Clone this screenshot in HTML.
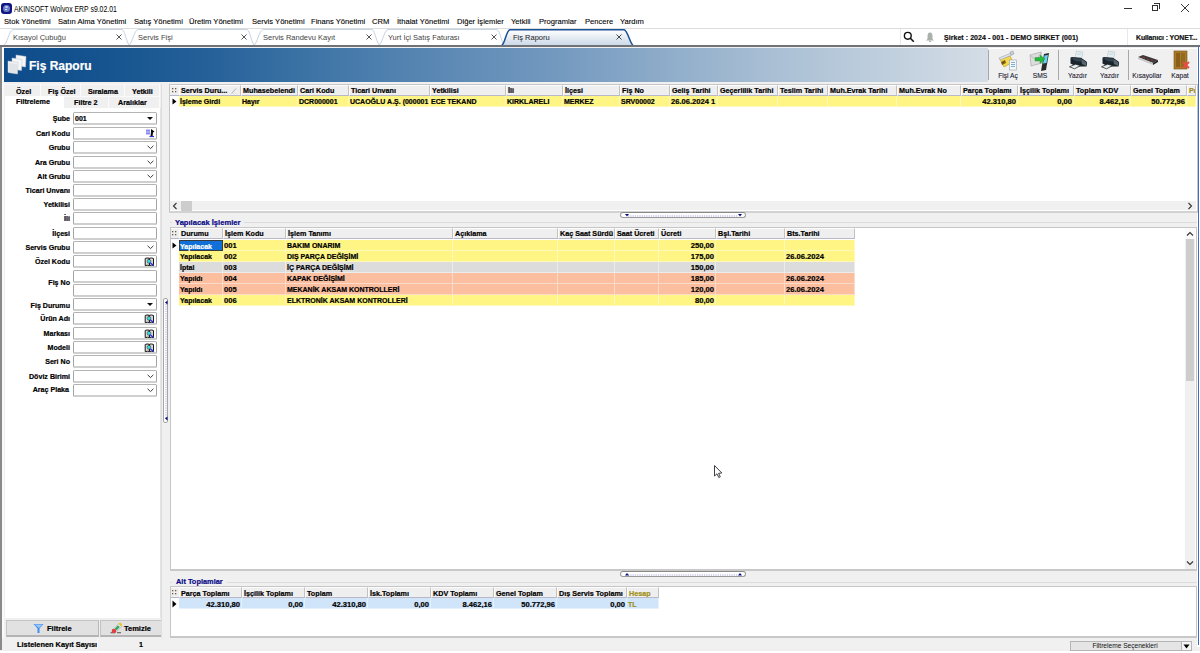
<!DOCTYPE html><html><head><meta charset="utf-8"><style>
*{margin:0;padding:0;box-sizing:border-box}
html,body{width:1200px;height:653px;overflow:hidden;background:#f0f0f0;font-family:"Liberation Sans",sans-serif;position:relative}
div{position:absolute}
.t{white-space:nowrap;line-height:10px;font-size:7.5px;color:#000}
.t[style*="bold"]{-webkit-text-stroke-width:0.2px}
.lbl{-webkit-text-stroke-width:0.2px}
.b{font-weight:bold}
.menu{font-size:7.6px;line-height:10px}
.hd{background:linear-gradient(#f7f7f7,#e6e6e6);border-right:1px solid #c8c8c8;border-bottom:1px solid #c8c8c8;font-weight:bold;font-size:7.5px;letter-spacing:-0.25px;line-height:10px;padding-left:2px;white-space:nowrap;overflow:hidden}
.cell{font-weight:bold;font-size:7.5px;letter-spacing:-0.25px;line-height:10px;padding-left:2px;white-space:nowrap;overflow:hidden;border-right:1px solid rgba(255,255,255,0.55);border-bottom:1px solid rgba(255,255,255,0.55)}
.r{text-align:right;padding-right:2px;padding-left:0}
.fld{background:#fff;border:1px solid #a0a0a0;border-bottom-color:#bcbcbc}
.lbl{font-weight:bold;font-size:7.2px;line-height:10px;text-align:right;white-space:nowrap}
</style></head><body>
<div style="left:0px;top:0px;width:1200px;height:28px;background:#fff"></div>
<div style="left:1px;top:3px;width:10.5px;height:10.5px;background:#0e1684;border-radius:3px"></div>
<div style="left:2.8px;top:4.8px;width:7px;height:7px;background:#7f8fd0;border-radius:50%;opacity:0.85"></div>
<div style="left:4.5px;top:6px;width:3px;height:2px;background:#c8d0f0;border-radius:50%"></div>
<div style="left:5px;top:8.5px;width:2px;height:1.5px;background:#e8ecff;border-radius:50%"></div>
<div class="t" style="left:14px;top:4px;font-size:8.2px;line-height:11px;transform:scaleX(0.84);transform-origin:0 0;color:#000">AKINSOFT Wolvox ERP s9.02.01</div>
<div style="left:1124px;top:8px;width:8px;height:1px;background:#333"></div>
<div style="left:1152px;top:5px;width:6px;height:6px;border:1px solid #333"></div>
<div style="left:1154px;top:3px;width:6px;height:6px;border-top:1px solid #333;border-right:1px solid #333"></div>
<svg style="position:absolute;left:1180px;top:3px" width="10" height="10"><path d="M1 1L9 9M9 1L1 9" stroke="#333" stroke-width="1"/></svg>
<div class="t" style="left:4px;top:17px;font-size:7.6px;color:#000;-webkit-text-stroke-width:0.1px">Stok Yönetimi</div>
<div class="t" style="left:58px;top:17px;font-size:7.6px;color:#000;-webkit-text-stroke-width:0.1px">Satın Alma Yönetimi</div>
<div class="t" style="left:134px;top:17px;font-size:7.6px;color:#000;-webkit-text-stroke-width:0.1px">Satış Yönetimi</div>
<div class="t" style="left:189px;top:17px;font-size:7.6px;color:#000;-webkit-text-stroke-width:0.1px">Üretim Yönetimi</div>
<div class="t" style="left:252px;top:17px;font-size:7.6px;color:#000;-webkit-text-stroke-width:0.1px">Servis Yönetimi</div>
<div class="t" style="left:311px;top:17px;font-size:7.6px;color:#000;-webkit-text-stroke-width:0.1px">Finans Yönetimi</div>
<div class="t" style="left:372px;top:17px;font-size:7.6px;color:#000;-webkit-text-stroke-width:0.1px">CRM</div>
<div class="t" style="left:397px;top:17px;font-size:7.6px;color:#000;-webkit-text-stroke-width:0.1px">İthalat Yönetimi</div>
<div class="t" style="left:457px;top:17px;font-size:7.6px;color:#000;-webkit-text-stroke-width:0.1px">Diğer İşlemler</div>
<div class="t" style="left:511px;top:17px;font-size:7.6px;color:#000;-webkit-text-stroke-width:0.1px">Yetkili</div>
<div class="t" style="left:539px;top:17px;font-size:7.6px;color:#000;-webkit-text-stroke-width:0.1px">Programlar</div>
<div class="t" style="left:585px;top:17px;font-size:7.6px;color:#000;-webkit-text-stroke-width:0.1px">Pencere</div>
<div class="t" style="left:620px;top:17px;font-size:7.6px;color:#000;-webkit-text-stroke-width:0.1px">Yardım</div>
<div style="left:0px;top:28px;width:1200px;height:1px;background:#dcdcdc"></div>
<div style="left:0px;top:29px;width:1200px;height:17px;background:#fff"></div>
<svg style="position:absolute;left:0;top:29px" width="1200" height="17"><path d="M3 16.5 C7 16.5 9 1 13 0.5 L122 0.5 C125 1 127 16.5 130 16.5" fill="#fff" stroke="#c5d3e2" stroke-width="1"/><path d="M128 16.5 C132 16.5 134 1 138 0.5 L247 0.5 C250 1 252 16.5 255 16.5" fill="#fff" stroke="#c5d3e2" stroke-width="1"/><path d="M253 16.5 C257 16.5 259 1 263 0.5 L372 0.5 C375 1 377 16.5 380 16.5" fill="#fff" stroke="#c5d3e2" stroke-width="1"/><path d="M378 16.5 C382 16.5 384 1 388 0.5 L497 0.5 C500 1 502 16.5 505 16.5" fill="#fff" stroke="#c5d3e2" stroke-width="1"/><defs><linearGradient id="ag" x1="0" y1="0" x2="0" y2="1"><stop offset="0" stop-color="#ffffff"/><stop offset="1" stop-color="#c9d7e6"/></linearGradient></defs><path d="M501 17 C505 16.5 506 1 510 0.7 L624 0.7 C628 1 630 16.5 634 17" fill="url(#ag)" stroke="#1a5096" stroke-width="1.5"/></svg>
<div class="t" style="left:13px;top:33px;font-size:7.5px;color:#444">Kısayol Çubuğu</div>
<svg style="position:absolute;left:116px;top:34px" width="6" height="6"><path d="M0.5 0.5L5.5 5.5M5.5 0.5L0.5 5.5" stroke="#444" stroke-width="0.9"/></svg>
<div class="t" style="left:138px;top:33px;font-size:7.5px;color:#444">Servis Fişi</div>
<svg style="position:absolute;left:241px;top:34px" width="6" height="6"><path d="M0.5 0.5L5.5 5.5M5.5 0.5L0.5 5.5" stroke="#444" stroke-width="0.9"/></svg>
<div class="t" style="left:263px;top:33px;font-size:7.5px;color:#444">Servis Randevu Kayıt</div>
<svg style="position:absolute;left:366px;top:34px" width="6" height="6"><path d="M0.5 0.5L5.5 5.5M5.5 0.5L0.5 5.5" stroke="#444" stroke-width="0.9"/></svg>
<div class="t" style="left:388px;top:33px;font-size:7.5px;color:#444">Yurt İçi Satış Faturası</div>
<svg style="position:absolute;left:491px;top:34px" width="6" height="6"><path d="M0.5 0.5L5.5 5.5M5.5 0.5L0.5 5.5" stroke="#444" stroke-width="0.9"/></svg>
<div class="t" style="left:513px;top:33px;font-size:7.5px;color:#222">Fiş Raporu</div>
<svg style="position:absolute;left:616px;top:34px" width="6" height="6"><path d="M0.5 0.5L5.5 5.5M5.5 0.5L0.5 5.5" stroke="#333" stroke-width="0.9"/></svg>
<div style="left:900px;top:29px;width:1px;height:17px;background:#e8e8e8"></div>
<div style="left:1127px;top:29px;width:1px;height:17px;background:#e8e8e8"></div>
<svg style="position:absolute;left:903px;top:31px" width="12" height="12"><circle cx="4.8" cy="4.8" r="3.4" fill="none" stroke="#111" stroke-width="1.4"/><path d="M7.3 7.3L10.8 10.8" stroke="#111" stroke-width="1.6"/></svg>
<svg style="position:absolute;left:925px;top:31px" width="10" height="12"><path d="M5 1.5C3 1.5 2.5 3.5 2.5 5.5L2.5 8L1 9.5L9 9.5L7.5 8L7.5 5.5C7.5 3.5 7 1.5 5 1.5Z" fill="#a9b1ab"/><rect x="4" y="9.8" width="2" height="1.2" fill="#a9b1ab"/></svg>
<div class="t" style="left:944px;top:33px;font-size:7px;font-weight:bold;letter-spacing:0.05px;color:#111">Şirket : 2024 - 001 - DEMO SIRKET (001)</div>
<div class="t" style="left:1136px;top:33px;font-size:6.9px;font-weight:bold;letter-spacing:-0.1px;color:#111">Kullanıcı : YONET...</div>
<div style="left:0px;top:45px;width:1200px;height:2px;background:#6f7378"></div>
<div style="left:0px;top:47px;width:2px;height:603px;background:#8a8a8a"></div>
<div style="left:2px;top:47px;width:2px;height:603px;background:#fafafa"></div>
<div style="left:1197px;top:47px;width:3px;height:600px;background:#fff"></div>
<div style="left:1198px;top:47px;width:1px;height:598px;background:#3b6fc0"></div>
<div style="left:4px;top:48px;width:984px;height:34px;background:linear-gradient(90deg,#0e4b8b 0%,#15548f 10%,#245f98 20%,#3a72a4 30%,#5282b0 40%,#7399bf 56%,#a9bfd4 78%,#d4dde6 100%)"></div>
<div class="t" style="left:29px;top:58px;font-size:12px;line-height:16px;font-weight:bold;color:#fff">Fiş Raporu</div>
<svg style="position:absolute;left:6px;top:54px" width="22" height="22">
<g fill="#f4f6f8" stroke="#c0c8d0" stroke-width="0.5">
<path d="M10 1L20 2.5L19.5 13L10 11.5Z"/>
<path d="M6 4L16 5.5L15.5 16.5L6 15Z"/>
<path d="M2 7L12 8.5L11.5 20L2 18.5Z"/>
</g>
<g stroke="#a8b0b8" stroke-width="0.5">
<path d="M4 9V18M6 9.3V18.5M8 9.6V19M10 9.9V19.3"/>
</g></svg>
<div style="left:988px;top:48px;width:209px;height:34px;background:#f0f0f0;border-top:1px solid #fff"></div>
<div style="left:988px;top:50px;width:1px;height:30px;background:#a8a8a8"></div>
<div style="left:1058px;top:50px;width:1px;height:30px;background:#a8a8a8"></div>
<div style="left:1128px;top:50px;width:1px;height:30px;background:#a8a8a8"></div>
<div class="t" style="left:978px;top:71px;width:60px;text-align:center;font-size:6.7px;line-height:9px;color:#1a1a30;-webkit-text-stroke-width:0.1px">Fişi Aç</div>
<div class="t" style="left:1010px;top:71px;width:60px;text-align:center;font-size:6.7px;line-height:9px;color:#1a1a30;-webkit-text-stroke-width:0.1px">SMS</div>
<div class="t" style="left:1047.5px;top:71px;width:60px;text-align:center;font-size:6.7px;line-height:9px;color:#1a1a30;-webkit-text-stroke-width:0.1px">Yazdır</div>
<div class="t" style="left:1079.5px;top:71px;width:60px;text-align:center;font-size:6.7px;line-height:9px;color:#1a1a30;-webkit-text-stroke-width:0.1px">Yazdır</div>
<div class="t" style="left:1117px;top:71px;width:60px;text-align:center;font-size:6.7px;line-height:9px;color:#1a1a30;-webkit-text-stroke-width:0.1px">Kısayollar</div>
<div class="t" style="left:1150px;top:71px;width:60px;text-align:center;font-size:6.7px;line-height:9px;color:#1a1a30;-webkit-text-stroke-width:0.1px">Kapat</div>
<svg style="position:absolute;left:997px;top:50px" width="22" height="21">
<path d="M3 9L13 6L16 12L7 17Z" fill="#f2d84a" stroke="#b8961a" stroke-width="0.6"/>
<path d="M4 12L8 10L9 13L5 15Z" fill="#7a5a10"/>
<path d="M2 8L14 3L15 5L3 10Z" fill="#dfe4ea" stroke="#8a96a2" stroke-width="0.5"/>
<path d="M13 2L16 1L17 4L14 5Z" fill="#c8d0d8" stroke="#8a96a2" stroke-width="0.5"/>
<rect x="12.5" y="10" width="7" height="10" fill="#f4f6f8" stroke="#9aa4ae" stroke-width="0.6"/>
<path d="M14 12.5H18M14 14.5H18M14 16.5H18" stroke="#5aa0d0" stroke-width="0.8"/>
</svg>
<svg style="position:absolute;left:1029px;top:50px" width="22" height="21">
<path d="M1 5L12 2L13 13L2 16Z" fill="#dcdcdc" stroke="#a0a0a0" stroke-width="0.6"/>
<path d="M1.5 5.5L7 10L12.5 2.5" fill="none" stroke="#b0b0b0" stroke-width="0.6"/>
<path d="M15 4L20 3L17 20L12 21Z" fill="#2a2a2a"/>
<path d="M15.5 5.5L19 5L17.5 13L14 13.5Z" fill="#62d4f0"/>
<path d="M16 9L11 5L11 7.5L6 7.5L6 11L11 11L11 13.5Z" fill="#28b83c" stroke="#1a8a2a" stroke-width="0.4"/>
</svg>
<svg style="position:absolute;left:1068px;top:50px" width="21" height="20">
<path d="M8.5 1L15 2.2L13.5 8.5L7 8Z" fill="#e6f0f4" stroke="#a8b8c0" stroke-width="0.5"/>
<path d="M9.5 3H13.5M9.3 4.5H13.2" stroke="#b8c8d0" stroke-width="0.5"/>
<path d="M2.5 8.5Q2 7.2 4 7L13 7.8L18.5 11.5Q19.5 12.5 19 14L18.5 16.5L8 16.5L2.5 13.5Z" fill="#1a242c"/>
<path d="M3 8L13 8.6L17.5 11.8L8 11.2Z" fill="#34444e"/>
<path d="M13.5 9.5L18.5 12.5L18 16L14 14Z" fill="#56666e"/>
<path d="M1.5 16.8L7.5 14.2L12.5 15.6L6.5 18.8Z" fill="#e4ecf0" stroke="#1a1a1a" stroke-width="0.7"/>
</svg>
<svg style="position:absolute;left:1100px;top:50px" width="21" height="20">
<path d="M8.5 1L15 2.2L13.5 8.5L7 8Z" fill="#e6f0f4" stroke="#a8b8c0" stroke-width="0.5"/>
<path d="M9.5 3H13.5M9.3 4.5H13.2" stroke="#b8c8d0" stroke-width="0.5"/>
<path d="M2.5 8.5Q2 7.2 4 7L13 7.8L18.5 11.5Q19.5 12.5 19 14L18.5 16.5L8 16.5L2.5 13.5Z" fill="#1a242c"/>
<path d="M3 8L13 8.6L17.5 11.8L8 11.2Z" fill="#34444e"/>
<path d="M13.5 9.5L18.5 12.5L18 16L14 14Z" fill="#56666e"/>
<path d="M1.5 16.8L7.5 14.2L12.5 15.6L6.5 18.8Z" fill="#e4ecf0" stroke="#1a1a1a" stroke-width="0.7"/>
</svg>
<svg style="position:absolute;left:1137px;top:54px" width="22" height="13">
<path d="M1 3L6 1L21 6L16 9Z" fill="#3a3a3a"/>
<path d="M1 3L16 9L16 11L1 5Z" fill="#c8c8c8"/>
<path d="M16 9L21 6L21 8L16 11Z" fill="#222"/>
<path d="M5 3L8 4M10 5L12 6M14 6L16 7" stroke="#c03030" stroke-width="0.8"/>
</svg>
<svg style="position:absolute;left:1173px;top:50px" width="17" height="20">
<rect x="1" y="1" width="13" height="18" fill="#a87a28" stroke="#7a5418" stroke-width="0.6"/>
<rect x="3" y="3" width="4" height="14" fill="#8a6018"/>
<rect x="8" y="3" width="4" height="14" fill="#946a20"/>
<path d="M10 12L16 18M16 12L10 18" stroke="#f04848" stroke-width="1.8"/>
</svg>
<div style="left:4px;top:84px;width:157px;height:534px;background:#f0f0f0"></div>
<div style="left:5px;top:84px;width:36px;height:12px;background:#f0f0f0;border-right:1px solid #fbfbfb;border-top:1px solid #f7f7f7"></div>
<div class="t" style="left:16px;top:86px;font-size:7.2px;font-weight:bold;line-height:11px">Özel</div>
<div style="left:41px;top:84px;width:40px;height:12px;background:#f0f0f0;border-right:1px solid #fbfbfb;border-top:1px solid #f7f7f7"></div>
<div class="t" style="left:48px;top:86px;font-size:7.2px;font-weight:bold;line-height:11px">Fiş Özel</div>
<div style="left:81px;top:84px;width:44px;height:12px;background:#f0f0f0;border-right:1px solid #fbfbfb;border-top:1px solid #f7f7f7"></div>
<div class="t" style="left:88px;top:86px;font-size:7.2px;font-weight:bold;line-height:11px">Sıralama</div>
<div style="left:125px;top:84px;width:35px;height:12px;background:#f0f0f0;border-right:1px solid #fbfbfb;border-top:1px solid #f7f7f7"></div>
<div class="t" style="left:132px;top:86px;font-size:7.2px;font-weight:bold;line-height:11px">Yetkili</div>
<div style="left:5px;top:96px;width:59px;height:12px;background:#fff"></div>
<div class="t" style="left:16px;top:96px;font-size:7.2px;font-weight:bold;line-height:11px">Filtreleme</div>
<div style="left:64px;top:96px;width:45px;height:12px;background:#f0f0f0;border-right:1px solid #fbfbfb;border-top:1px solid #fafafa"></div>
<div class="t" style="left:74px;top:97px;font-size:7.2px;font-weight:bold;line-height:11px">Filtre 2</div>
<div style="left:109px;top:96px;width:51px;height:12px;background:#f0f0f0;border-right:1px solid #fbfbfb;border-top:1px solid #fafafa"></div>
<div class="t" style="left:118px;top:97px;font-size:7.2px;font-weight:bold;line-height:11px">Aralıklar</div>
<div style="left:5px;top:108px;width:156px;height:510px;background:#fff;border-right:1px solid #e4e4e4"></div>
<div style="left:73px;top:112.0px;width:84px;height:13px;background:#fff;border:1px solid #a4a4a4;border-top-color:#b4b4b4;border-bottom:2px solid #cfcfcf;border-radius:1.5px"></div>
<div class="lbl" style="left:0px;top:114px;width:70px;font-size:7.1px;line-height:11px">Şube</div>
<svg style="position:absolute;left:147px;top:117.0px" width="6" height="4"><path d="M0 0L6 0L3 3Z" fill="#111"/></svg>
<div style="left:73px;top:126.5px;width:84px;height:13px;background:#fff;border:1px solid #a4a4a4;border-top-color:#b4b4b4;border-bottom:2px solid #cfcfcf;border-radius:1.5px"></div>
<div class="lbl" style="left:0px;top:129px;width:70px;font-size:7.1px;line-height:11px">Cari Kodu</div>
<svg style="position:absolute;left:145px;top:128.0px" width="11" height="10"><path d="M1 2.2H5M1 4H5M1 5.8H5" stroke="#5050f0" stroke-width="1"/><path d="M6 1L9.5 3.5L8 4.5L7.5 8.5L5.5 8.5L6 4Z" fill="#0a0a0a"/><path d="M4.5 8.5H9" stroke="#2a30d0" stroke-width="1.2"/></svg>
<div style="left:73px;top:141.0px;width:84px;height:13px;background:#fff;border:1px solid #a4a4a4;border-top-color:#b4b4b4;border-bottom:2px solid #cfcfcf;border-radius:1.5px"></div>
<div class="lbl" style="left:0px;top:143px;width:70px;font-size:7.1px;line-height:11px">Grubu</div>
<svg style="position:absolute;left:147px;top:145.0px" width="7" height="5"><path d="M0.6 0.8L3.5 3.6L6.4 0.8" fill="none" stroke="#3a3a3a" stroke-width="1"/></svg>
<div style="left:73px;top:155.5px;width:84px;height:13px;background:#fff;border:1px solid #a4a4a4;border-top-color:#b4b4b4;border-bottom:2px solid #cfcfcf;border-radius:1.5px"></div>
<div class="lbl" style="left:0px;top:158px;width:70px;font-size:7.1px;line-height:11px">Ara Grubu</div>
<svg style="position:absolute;left:147px;top:159.5px" width="7" height="5"><path d="M0.6 0.8L3.5 3.6L6.4 0.8" fill="none" stroke="#3a3a3a" stroke-width="1"/></svg>
<div style="left:73px;top:169.5px;width:84px;height:13px;background:#fff;border:1px solid #a4a4a4;border-top-color:#b4b4b4;border-bottom:2px solid #cfcfcf;border-radius:1.5px"></div>
<div class="lbl" style="left:0px;top:172px;width:70px;font-size:7.1px;line-height:11px">Alt Grubu</div>
<svg style="position:absolute;left:147px;top:173.5px" width="7" height="5"><path d="M0.6 0.8L3.5 3.6L6.4 0.8" fill="none" stroke="#3a3a3a" stroke-width="1"/></svg>
<div style="left:73px;top:184.0px;width:84px;height:13px;background:#fff;border:1px solid #a4a4a4;border-top-color:#b4b4b4;border-bottom:2px solid #cfcfcf;border-radius:1.5px"></div>
<div class="lbl" style="left:0px;top:186px;width:70px;font-size:7.1px;line-height:11px">Ticari Unvanı</div>
<div style="left:73px;top:197.5px;width:84px;height:13px;background:#fff;border:1px solid #a4a4a4;border-top-color:#b4b4b4;border-bottom:2px solid #cfcfcf;border-radius:1.5px"></div>
<div class="lbl" style="left:0px;top:200px;width:70px;font-size:7.1px;line-height:11px">Yetkilisi</div>
<div style="left:73px;top:212.0px;width:84px;height:13px;background:#fff;border:1px solid #a4a4a4;border-top-color:#b4b4b4;border-bottom:2px solid #cfcfcf;border-radius:1.5px"></div>
<div class="lbl" style="left:0px;top:214px;width:70px;font-size:7.1px;line-height:11px">İli</div>
<div style="left:73px;top:226.5px;width:84px;height:13px;background:#fff;border:1px solid #a4a4a4;border-top-color:#b4b4b4;border-bottom:2px solid #cfcfcf;border-radius:1.5px"></div>
<div class="lbl" style="left:0px;top:229px;width:70px;font-size:7.1px;line-height:11px">İlçesi</div>
<div style="left:73px;top:240.5px;width:84px;height:13px;background:#fff;border:1px solid #a4a4a4;border-top-color:#b4b4b4;border-bottom:2px solid #cfcfcf;border-radius:1.5px"></div>
<div class="lbl" style="left:0px;top:243px;width:70px;font-size:7.1px;line-height:11px">Servis Grubu</div>
<svg style="position:absolute;left:147px;top:244.5px" width="7" height="5"><path d="M0.6 0.8L3.5 3.6L6.4 0.8" fill="none" stroke="#3a3a3a" stroke-width="1"/></svg>
<div style="left:73px;top:255.0px;width:84px;height:13px;background:#fff;border:1px solid #a4a4a4;border-top-color:#b4b4b4;border-bottom:2px solid #cfcfcf;border-radius:1.5px"></div>
<div class="lbl" style="left:0px;top:257px;width:70px;font-size:7.1px;line-height:11px">Özel Kodu</div>
<svg style="position:absolute;left:144px;top:257.0px" width="11" height="10"><path d="M1.2 1.5Q3 0.6 5 1.2L5.5 8.5Q3.5 8 1.2 8.6Z" fill="#d8d8d8" stroke="#1a1a1a" stroke-width="1"/><path d="M5.5 1.2Q7.5 0.6 9.5 1.5L9.5 8.6Q7.5 8 5.5 8.5Z" fill="#d8d8d8" stroke="#1a1a1a" stroke-width="1"/><circle cx="5" cy="4.3" r="1.9" fill="#30e0e0" stroke="#402020" stroke-width="0.5"/><path d="M6.3 5.8L9.5 8.6" stroke="#3030e0" stroke-width="1.3"/></svg>
<div style="left:73px;top:269.5px;width:84px;height:13px;background:#fff;border:1px solid #a4a4a4;border-top-color:#b4b4b4;border-bottom:2px solid #cfcfcf;border-radius:1.5px"></div>
<div style="left:73px;top:284.0px;width:84px;height:13px;background:#fff;border:1px solid #a4a4a4;border-top-color:#b4b4b4;border-bottom:2px solid #cfcfcf;border-radius:1.5px"></div>
<div style="left:73px;top:298.0px;width:84px;height:13px;background:#fff;border:1px solid #a4a4a4;border-top-color:#b4b4b4;border-bottom:2px solid #cfcfcf;border-radius:1.5px"></div>
<div class="lbl" style="left:0px;top:301px;width:70px;font-size:7.1px;line-height:11px">Fiş Durumu</div>
<svg style="position:absolute;left:147px;top:303.0px" width="6" height="4"><path d="M0 0L6 0L3 3Z" fill="#111"/></svg>
<div style="left:73px;top:312.0px;width:84px;height:13px;background:#fff;border:1px solid #a4a4a4;border-top-color:#b4b4b4;border-bottom:2px solid #cfcfcf;border-radius:1.5px"></div>
<div class="lbl" style="left:0px;top:314px;width:70px;font-size:7.1px;line-height:11px">Ürün Adı</div>
<svg style="position:absolute;left:144px;top:314.0px" width="11" height="10"><path d="M1.2 1.5Q3 0.6 5 1.2L5.5 8.5Q3.5 8 1.2 8.6Z" fill="#d8d8d8" stroke="#1a1a1a" stroke-width="1"/><path d="M5.5 1.2Q7.5 0.6 9.5 1.5L9.5 8.6Q7.5 8 5.5 8.5Z" fill="#d8d8d8" stroke="#1a1a1a" stroke-width="1"/><circle cx="5" cy="4.3" r="1.9" fill="#30e0e0" stroke="#402020" stroke-width="0.5"/><path d="M6.3 5.8L9.5 8.6" stroke="#3030e0" stroke-width="1.3"/></svg>
<div style="left:73px;top:326.5px;width:84px;height:13px;background:#fff;border:1px solid #a4a4a4;border-top-color:#b4b4b4;border-bottom:2px solid #cfcfcf;border-radius:1.5px"></div>
<div class="lbl" style="left:0px;top:329px;width:70px;font-size:7.1px;line-height:11px">Markası</div>
<svg style="position:absolute;left:144px;top:328.5px" width="11" height="10"><path d="M1.2 1.5Q3 0.6 5 1.2L5.5 8.5Q3.5 8 1.2 8.6Z" fill="#d8d8d8" stroke="#1a1a1a" stroke-width="1"/><path d="M5.5 1.2Q7.5 0.6 9.5 1.5L9.5 8.6Q7.5 8 5.5 8.5Z" fill="#d8d8d8" stroke="#1a1a1a" stroke-width="1"/><circle cx="5" cy="4.3" r="1.9" fill="#30e0e0" stroke="#402020" stroke-width="0.5"/><path d="M6.3 5.8L9.5 8.6" stroke="#3030e0" stroke-width="1.3"/></svg>
<div style="left:73px;top:340.5px;width:84px;height:13px;background:#fff;border:1px solid #a4a4a4;border-top-color:#b4b4b4;border-bottom:2px solid #cfcfcf;border-radius:1.5px"></div>
<div class="lbl" style="left:0px;top:343px;width:70px;font-size:7.1px;line-height:11px">Modeli</div>
<svg style="position:absolute;left:144px;top:342.5px" width="11" height="10"><path d="M1.2 1.5Q3 0.6 5 1.2L5.5 8.5Q3.5 8 1.2 8.6Z" fill="#d8d8d8" stroke="#1a1a1a" stroke-width="1"/><path d="M5.5 1.2Q7.5 0.6 9.5 1.5L9.5 8.6Q7.5 8 5.5 8.5Z" fill="#d8d8d8" stroke="#1a1a1a" stroke-width="1"/><circle cx="5" cy="4.3" r="1.9" fill="#30e0e0" stroke="#402020" stroke-width="0.5"/><path d="M6.3 5.8L9.5 8.6" stroke="#3030e0" stroke-width="1.3"/></svg>
<div style="left:73px;top:355.0px;width:84px;height:13px;background:#fff;border:1px solid #a4a4a4;border-top-color:#b4b4b4;border-bottom:2px solid #cfcfcf;border-radius:1.5px"></div>
<div class="lbl" style="left:0px;top:357px;width:70px;font-size:7.1px;line-height:11px">Seri No</div>
<div style="left:73px;top:369.5px;width:84px;height:13px;background:#fff;border:1px solid #a4a4a4;border-top-color:#b4b4b4;border-bottom:2px solid #cfcfcf;border-radius:1.5px"></div>
<div class="lbl" style="left:0px;top:372px;width:70px;font-size:7.1px;line-height:11px">Döviz Birimi</div>
<svg style="position:absolute;left:147px;top:373.5px" width="7" height="5"><path d="M0.6 0.8L3.5 3.6L6.4 0.8" fill="none" stroke="#3a3a3a" stroke-width="1"/></svg>
<div style="left:73px;top:383.5px;width:84px;height:13px;background:#fff;border:1px solid #a4a4a4;border-top-color:#b4b4b4;border-bottom:2px solid #cfcfcf;border-radius:1.5px"></div>
<div class="lbl" style="left:0px;top:385px;width:69px;font-size:7.1px;line-height:11px">Araç Plaka</div>
<svg style="position:absolute;left:147px;top:387.5px" width="7" height="5"><path d="M0.6 0.8L3.5 3.6L6.4 0.8" fill="none" stroke="#3a3a3a" stroke-width="1"/></svg>
<div class="lbl" style="left:0px;top:278px;width:70px;font-size:7.1px;line-height:11px">Fiş No</div>
<div class="t" style="left:75px;top:113px;font-size:7px;font-weight:bold;line-height:11px">001</div>
<div style="left:4px;top:618px;width:157px;height:20px;background:#f0f0f0"></div>
<div style="left:6px;top:620px;width:93px;height:17px;background:#e1e1e1;border:1px solid #c4c4c4;border-bottom:2px solid #b4b4b4;border-right-color:#b8b8b8"></div>
<div style="left:100px;top:620px;width:62px;height:17px;background:#e1e1e1;border:1px solid #c4c4c4;border-bottom:2px solid #b4b4b4;border-right-color:#b8b8b8"></div>
<svg style="position:absolute;left:33px;top:623px" width="11" height="11"><path d="M0.5 1L10.5 1L6.5 5.5L6.5 10L4.5 10L4.5 5.5Z" fill="#3d8ef0"/><path d="M1.5 1.5L9.5 1.5L6 5" fill="#9cc6f8"/></svg>
<div class="t" style="left:47px;top:623px;font-size:7.5px;font-weight:bold;line-height:11px">Filtrele</div>
<svg style="position:absolute;left:110px;top:622px" width="13" height="12"><path d="M0.5 10.8H4.5M7 10.8H11" stroke="#505050" stroke-width="1.1"/><path d="M2.5 8L8.5 1.8L11.5 4.6L5.5 10.8Z" fill="#eef2f2" stroke="#8a9a9a" stroke-width="0.5"/><path d="M4.8 6.6L8 3.3L9.8 5L6.6 8.4Z" fill="#2faa60"/><path d="M8.5 1.8L10.3 0.5L12 2.3L11.5 4.6Z" fill="#f2c418"/><circle cx="4" cy="9" r="2.3" fill="#e04040"/></svg>
<div class="t" style="left:124px;top:623px;font-size:7.5px;font-weight:bold;line-height:11px">Temizle</div>
<div style="left:0px;top:638px;width:1197px;height:13px;background:#f0f0f0"></div>
<div style="left:0px;top:651px;width:1200px;height:2px;background:#fff"></div>
<div style="left:0px;top:47px;width:2px;height:603px;background:#8a8a8a"></div>
<div style="left:2px;top:47px;width:2px;height:591px;background:#fafafa"></div>
<div class="t" style="left:17px;top:639px;font-size:7.4px;font-weight:bold;line-height:11px">Listelenen Kayıt Sayısı</div>
<div style="left:97px;top:638px;width:47px;height:13px;background:#f0f0f0;border-left:1px solid #f8f8f8"></div>
<div class="t" style="left:139px;top:639px;font-size:7.2px;font-weight:bold;line-height:11px">1</div>
<div style="left:1070px;top:641px;width:122px;height:10px;background:#e5e5e5;border:1px solid #b5b5b5"></div>
<div class="t" style="left:1070px;top:641px;width:110px;text-align:center;font-size:6.6px;line-height:10px;color:#111">Filtreleme Seçenekleri</div>
<div style="left:1181px;top:641px;width:11px;height:10px;background:#f4f4f4;border:1px solid #b5b5b5"></div>
<svg style="position:absolute;left:1183px;top:644px" width="7" height="5"><path d="M0.5 0.5L6.5 0.5L3.5 4.5Z" fill="#000"/></svg>
<div style="left:161px;top:84px;width:9px;height:554px;background:#f0f0f0;border-left:1px solid #dedede"></div>
<div style="left:163px;top:298px;width:5px;height:125px;background:#fff;border:1px solid #a6a6a6;border-radius:2px"></div>
<svg style="position:absolute;left:165px;top:304px" width="2" height="114"><path d="M1 0V114" stroke="#9c9cd4" stroke-width="0.9" stroke-dasharray="1.2 1.1"/></svg>
<svg style="position:absolute;left:164px;top:299px" width="4" height="124"><path d="M3.5 1.5L1 3.5L3.5 5.5Z" fill="#0a0a7a"/><path d="M3.5 117.5L1 119.5L3.5 121.5Z" fill="#0a0a7a"/></svg>
<div style="left:169px;top:84px;width:1029px;height:129px;background:#fff;border:1px solid #c6c6c6;border-bottom:2px solid #d2d2d2"></div>
<div style="left:170px;top:85px;width:9px;height:11px;background:#efefef;border-top:1px solid #fdfdfd;border-bottom:1px solid #b8b8c8"></div>
<svg style="position:absolute;left:172px;top:88px" width="6" height="6"><g fill="#6a5840"><rect x="0" y="0" width="1.3" height="1.3"/><rect x="3" y="0" width="1.3" height="1.3"/><rect x="0" y="3" width="1.3" height="1.3"/><rect x="3" y="3" width="1.3" height="1.3"/></g></svg>
<div style="left:179px;top:85px;width:62px;height:11px;background:#efefef;border-top:1px solid #fdfdfd;border-left:1px solid #fdfdfd;border-right:1px solid #c2c2c2;border-bottom:1px solid #b8b8c8;overflow:hidden"><div class="t" style="left:1px;top:0px;font-size:7.2px;font-weight:bold;line-height:9px;color:#000">Servis Duru...</div></div>
<div style="left:179px;top:96px;width:62px;height:11px;background:#fef584;border-right:1px solid rgba(255,255,255,0.45);border-bottom:1px solid rgba(255,255,255,0.45);overflow:hidden;"><div class="t" style="left:1px;top:1px;font-size:7px;font-weight:bold;line-height:10px;color:#000">İşleme Girdi</div></div>
<div style="left:241px;top:85px;width:57px;height:11px;background:#efefef;border-top:1px solid #fdfdfd;border-left:1px solid #fdfdfd;border-right:1px solid #c2c2c2;border-bottom:1px solid #b8b8c8;overflow:hidden"><div class="t" style="left:1px;top:0px;font-size:7.2px;font-weight:bold;line-height:9px;color:#000">Muhasebelendi</div></div>
<div style="left:241px;top:96px;width:57px;height:11px;background:#fef584;border-right:1px solid rgba(255,255,255,0.45);border-bottom:1px solid rgba(255,255,255,0.45);overflow:hidden;"><div class="t" style="left:1px;top:1px;font-size:7px;font-weight:bold;line-height:10px;color:#000">Hayır</div></div>
<div style="left:298px;top:85px;width:51px;height:11px;background:#efefef;border-top:1px solid #fdfdfd;border-left:1px solid #fdfdfd;border-right:1px solid #c2c2c2;border-bottom:1px solid #b8b8c8;overflow:hidden"><div class="t" style="left:1px;top:0px;font-size:7.2px;font-weight:bold;line-height:9px;color:#000">Cari Kodu</div></div>
<div style="left:298px;top:96px;width:51px;height:11px;background:#fef584;border-right:1px solid rgba(255,255,255,0.45);border-bottom:1px solid rgba(255,255,255,0.45);overflow:hidden;"><div class="t" style="left:1px;top:1px;font-size:7px;font-weight:bold;line-height:10px;color:#000">DCR000001</div></div>
<div style="left:349px;top:85px;width:81px;height:11px;background:#efefef;border-top:1px solid #fdfdfd;border-left:1px solid #fdfdfd;border-right:1px solid #c2c2c2;border-bottom:1px solid #b8b8c8;overflow:hidden"><div class="t" style="left:1px;top:0px;font-size:7.2px;font-weight:bold;line-height:9px;color:#000">Ticari Unvanı</div></div>
<div style="left:349px;top:96px;width:81px;height:11px;background:#fef584;border-right:1px solid rgba(255,255,255,0.45);border-bottom:1px solid rgba(255,255,255,0.45);overflow:hidden;"><div class="t" style="left:1px;top:1px;font-size:7px;font-weight:bold;line-height:10px;color:#000">UCAOĞLU A.Ş. (000001</div></div>
<div style="left:430px;top:85px;width:76px;height:11px;background:#efefef;border-top:1px solid #fdfdfd;border-left:1px solid #fdfdfd;border-right:1px solid #c2c2c2;border-bottom:1px solid #b8b8c8;overflow:hidden"><div class="t" style="left:1px;top:0px;font-size:7.2px;font-weight:bold;line-height:9px;color:#000">Yetkilisi</div></div>
<div style="left:430px;top:96px;width:76px;height:11px;background:#fef584;border-right:1px solid rgba(255,255,255,0.45);border-bottom:1px solid rgba(255,255,255,0.45);overflow:hidden;"><div class="t" style="left:1px;top:1px;font-size:7px;font-weight:bold;line-height:10px;color:#000">ECE TEKAND</div></div>
<div style="left:506px;top:85px;width:57px;height:11px;background:#efefef;border-top:1px solid #fdfdfd;border-left:1px solid #fdfdfd;border-right:1px solid #c2c2c2;border-bottom:1px solid #b8b8c8;overflow:hidden"><div class="t" style="left:1px;top:0px;font-size:7.2px;font-weight:bold;line-height:9px;color:#000">İli</div></div>
<div style="left:506px;top:96px;width:57px;height:11px;background:#fef584;border-right:1px solid rgba(255,255,255,0.45);border-bottom:1px solid rgba(255,255,255,0.45);overflow:hidden;"><div class="t" style="left:1px;top:1px;font-size:7px;font-weight:bold;line-height:10px;color:#000">KIRKLARELI</div></div>
<div style="left:563px;top:85px;width:57px;height:11px;background:#efefef;border-top:1px solid #fdfdfd;border-left:1px solid #fdfdfd;border-right:1px solid #c2c2c2;border-bottom:1px solid #b8b8c8;overflow:hidden"><div class="t" style="left:1px;top:0px;font-size:7.2px;font-weight:bold;line-height:9px;color:#000">İlçesi</div></div>
<div style="left:563px;top:96px;width:57px;height:11px;background:#fef584;border-right:1px solid rgba(255,255,255,0.45);border-bottom:1px solid rgba(255,255,255,0.45);overflow:hidden;"><div class="t" style="left:1px;top:1px;font-size:7px;font-weight:bold;line-height:10px;color:#000">MERKEZ</div></div>
<div style="left:620px;top:85px;width:50px;height:11px;background:#efefef;border-top:1px solid #fdfdfd;border-left:1px solid #fdfdfd;border-right:1px solid #c2c2c2;border-bottom:1px solid #b8b8c8;overflow:hidden"><div class="t" style="left:1px;top:0px;font-size:7.2px;font-weight:bold;line-height:9px;color:#000">Fiş No</div></div>
<div style="left:620px;top:96px;width:50px;height:11px;background:#fef584;border-right:1px solid rgba(255,255,255,0.45);border-bottom:1px solid rgba(255,255,255,0.45);overflow:hidden;"><div class="t" style="left:1px;top:1px;font-size:7px;font-weight:bold;line-height:10px;color:#000">SRV00002</div></div>
<div style="left:670px;top:85px;width:48px;height:11px;background:#efefef;border-top:1px solid #fdfdfd;border-left:1px solid #fdfdfd;border-right:1px solid #c2c2c2;border-bottom:1px solid #b8b8c8;overflow:hidden"><div class="t" style="left:1px;top:0px;font-size:7.2px;font-weight:bold;line-height:9px;color:#000">Geliş Tarihi</div></div>
<div style="left:670px;top:96px;width:48px;height:11px;background:#fef584;border-right:1px solid rgba(255,255,255,0.45);border-bottom:1px solid rgba(255,255,255,0.45);overflow:hidden;"><div class="t" style="left:1px;top:1px;font-size:7.6px;font-weight:bold;line-height:10px;color:#000">26.06.2024 1</div></div>
<div style="left:718px;top:85px;width:60px;height:11px;background:#efefef;border-top:1px solid #fdfdfd;border-left:1px solid #fdfdfd;border-right:1px solid #c2c2c2;border-bottom:1px solid #b8b8c8;overflow:hidden"><div class="t" style="left:1px;top:0px;font-size:7.2px;font-weight:bold;line-height:9px;color:#000">Geçerlilik Tarihi</div></div>
<div style="left:718px;top:96px;width:60px;height:11px;background:#fef584;border-right:1px solid rgba(255,255,255,0.45);border-bottom:1px solid rgba(255,255,255,0.45);overflow:hidden;"><div class="t" style="left:1px;top:1px;font-size:7px;font-weight:bold;line-height:10px;color:#000"></div></div>
<div style="left:778px;top:85px;width:50px;height:11px;background:#efefef;border-top:1px solid #fdfdfd;border-left:1px solid #fdfdfd;border-right:1px solid #c2c2c2;border-bottom:1px solid #b8b8c8;overflow:hidden"><div class="t" style="left:1px;top:0px;font-size:7.2px;font-weight:bold;line-height:9px;color:#000">Teslim Tarihi</div></div>
<div style="left:778px;top:96px;width:50px;height:11px;background:#fef584;border-right:1px solid rgba(255,255,255,0.45);border-bottom:1px solid rgba(255,255,255,0.45);overflow:hidden;"><div class="t" style="left:1px;top:1px;font-size:7px;font-weight:bold;line-height:10px;color:#000"></div></div>
<div style="left:828px;top:85px;width:69px;height:11px;background:#efefef;border-top:1px solid #fdfdfd;border-left:1px solid #fdfdfd;border-right:1px solid #c2c2c2;border-bottom:1px solid #b8b8c8;overflow:hidden"><div class="t" style="left:1px;top:0px;font-size:7.2px;font-weight:bold;line-height:9px;color:#000">Muh.Evrak Tarihi</div></div>
<div style="left:828px;top:96px;width:69px;height:11px;background:#fef584;border-right:1px solid rgba(255,255,255,0.45);border-bottom:1px solid rgba(255,255,255,0.45);overflow:hidden;"><div class="t" style="left:1px;top:1px;font-size:7px;font-weight:bold;line-height:10px;color:#000"></div></div>
<div style="left:897px;top:85px;width:64px;height:11px;background:#efefef;border-top:1px solid #fdfdfd;border-left:1px solid #fdfdfd;border-right:1px solid #c2c2c2;border-bottom:1px solid #b8b8c8;overflow:hidden"><div class="t" style="left:1px;top:0px;font-size:7.2px;font-weight:bold;line-height:9px;color:#000">Muh.Evrak No</div></div>
<div style="left:897px;top:96px;width:64px;height:11px;background:#fef584;border-right:1px solid rgba(255,255,255,0.45);border-bottom:1px solid rgba(255,255,255,0.45);overflow:hidden;"><div class="t" style="left:1px;top:1px;font-size:7px;font-weight:bold;line-height:10px;color:#000"></div></div>
<div style="left:961px;top:85px;width:57px;height:11px;background:#efefef;border-top:1px solid #fdfdfd;border-left:1px solid #fdfdfd;border-right:1px solid #c2c2c2;border-bottom:1px solid #b8b8c8;overflow:hidden"><div class="t" style="left:1px;top:0px;font-size:7.2px;font-weight:bold;line-height:9px;color:#000">Parça Toplamı</div></div>
<div style="left:961px;top:96px;width:57px;height:11px;background:#fef584;border-right:1px solid rgba(255,255,255,0.45);border-bottom:1px solid rgba(255,255,255,0.45);overflow:hidden;"><div class="t" style="right:1px;top:1px;font-size:7.6px;font-weight:bold;line-height:10px;color:#000">42.310,80</div></div>
<div style="left:1018px;top:85px;width:56px;height:11px;background:#efefef;border-top:1px solid #fdfdfd;border-left:1px solid #fdfdfd;border-right:1px solid #c2c2c2;border-bottom:1px solid #b8b8c8;overflow:hidden"><div class="t" style="left:1px;top:0px;font-size:7.2px;font-weight:bold;line-height:9px;color:#000">İşçilik Toplamı</div></div>
<div style="left:1018px;top:96px;width:56px;height:11px;background:#fef584;border-right:1px solid rgba(255,255,255,0.45);border-bottom:1px solid rgba(255,255,255,0.45);overflow:hidden;"><div class="t" style="right:1px;top:1px;font-size:7.6px;font-weight:bold;line-height:10px;color:#000">0,00</div></div>
<div style="left:1074px;top:85px;width:57px;height:11px;background:#efefef;border-top:1px solid #fdfdfd;border-left:1px solid #fdfdfd;border-right:1px solid #c2c2c2;border-bottom:1px solid #b8b8c8;overflow:hidden"><div class="t" style="left:1px;top:0px;font-size:7.2px;font-weight:bold;line-height:9px;color:#000">Toplam KDV</div></div>
<div style="left:1074px;top:96px;width:57px;height:11px;background:#fef584;border-right:1px solid rgba(255,255,255,0.45);border-bottom:1px solid rgba(255,255,255,0.45);overflow:hidden;"><div class="t" style="right:1px;top:1px;font-size:7.6px;font-weight:bold;line-height:10px;color:#000">8.462,16</div></div>
<div style="left:1131px;top:85px;width:56px;height:11px;background:#efefef;border-top:1px solid #fdfdfd;border-left:1px solid #fdfdfd;border-right:1px solid #c2c2c2;border-bottom:1px solid #b8b8c8;overflow:hidden"><div class="t" style="left:1px;top:0px;font-size:7.2px;font-weight:bold;line-height:9px;color:#000">Genel Toplam</div></div>
<div style="left:1131px;top:96px;width:56px;height:11px;background:#fef584;border-right:1px solid rgba(255,255,255,0.45);border-bottom:1px solid rgba(255,255,255,0.45);overflow:hidden;"><div class="t" style="right:1px;top:1px;font-size:7.6px;font-weight:bold;line-height:10px;color:#000">50.772,96</div></div>
<div style="left:1187px;top:85px;width:9px;height:11px;background:#efefef;border-top:1px solid #fdfdfd;border-left:1px solid #fdfdfd;border-right:1px solid #c2c2c2;border-bottom:1px solid #b8b8c8;overflow:hidden"><div class="t" style="left:1px;top:0px;font-size:7.2px;font-weight:bold;line-height:9px;color:#a08a18">Pa</div></div>
<div style="left:1187px;top:96px;width:9px;height:11px;background:#fef584;border-right:1px solid rgba(255,255,255,0.45);border-bottom:1px solid rgba(255,255,255,0.45);overflow:hidden;"><div class="t" style="left:1px;top:1px;font-size:7px;font-weight:bold;line-height:10px;color:#000"></div></div>
<svg style="position:absolute;left:231px;top:88px" width="6" height="6"><path d="M0.5 5.5L5 0.5" stroke="#9a9a9a" stroke-width="0.7"/><path d="M0.5 5.5L5.5 5.5" stroke="#e0e0e0" stroke-width="0.7"/></svg>
<svg style="position:absolute;left:172px;top:98px" width="5" height="7"><path d="M0.5 0.5L4.5 3.5L0.5 6.5Z" fill="#000"/></svg>
<div style="left:170px;top:201px;width:1026px;height:9px;background:#f0f0f0"></div>
<svg style="position:absolute;left:172px;top:202px" width="6" height="8"><path d="M4.5 1L1.5 4L4.5 7" fill="none" stroke="#333" stroke-width="1.1"/></svg>
<div style="left:181px;top:201px;width:11px;height:10px;background:#cdcdcd"></div>
<svg style="position:absolute;left:1187px;top:202px" width="6" height="8"><path d="M1.5 1L4.5 4L1.5 7" fill="none" stroke="#333" stroke-width="1.1"/></svg>
<div style="left:620px;top:212px;width:126px;height:6px;background:#fff;border:1px solid #9a9a9a;border-top-color:#8a8a8a;border-radius:3px"></div>
<svg style="position:absolute;left:628px;top:214.5px" width="110" height="2"><path d="M0 1H110" stroke="#9c9cd4" stroke-width="0.9" stroke-dasharray="1.2 1.1"/></svg>
<svg style="position:absolute;left:625px;top:213.8px" width="4" height="3"><path d="M0 0L4 0L2 2.5Z" fill="#0a0a80"/></svg>
<svg style="position:absolute;left:738px;top:213.8px" width="4" height="3"><path d="M0 0L4 0L2 2.5Z" fill="#0a0a80"/></svg>
<div style="left:620px;top:571px;width:126px;height:6px;background:#fff;border:1px solid #9a9a9a;border-top-color:#8a8a8a;border-radius:3px"></div>
<svg style="position:absolute;left:628px;top:573.5px" width="110" height="2"><path d="M0 1H110" stroke="#9c9cd4" stroke-width="0.9" stroke-dasharray="1.2 1.1"/></svg>
<svg style="position:absolute;left:625px;top:572.8px" width="4" height="3"><path d="M0 2.5L4 2.5L2 0Z" fill="#0a0a80"/></svg>
<svg style="position:absolute;left:738px;top:572.8px" width="4" height="3"><path d="M0 2.5L4 2.5L2 0Z" fill="#0a0a80"/></svg>
<div style="left:170px;top:222px;width:1027px;height:1px;background:#dcdcdc"></div>
<div style="left:172px;top:216px;width:72px;height:11px;background:#f0f0f0"></div>
<div class="t" style="left:175px;top:217px;font-size:7.6px;font-weight:bold;line-height:11px;color:#0a0a86">Yapılacak İşlemler</div>
<div style="left:170px;top:227px;width:1027px;height:344px;background:#fff;border:1px solid #c6c6c6;border-bottom:2px solid #c8c8c8"></div>
<div style="left:171px;top:228px;width:8px;height:11px;background:#efefef;border-top:1px solid #fdfdfd;border-bottom:1px solid #b8b8c8"></div>
<svg style="position:absolute;left:172px;top:231px" width="6" height="6"><g fill="#6a5840"><rect x="0" y="0" width="1.3" height="1.3"/><rect x="3" y="0" width="1.3" height="1.3"/><rect x="0" y="3" width="1.3" height="1.3"/><rect x="3" y="3" width="1.3" height="1.3"/></g></svg>
<div style="left:179px;top:228px;width:44px;height:11px;background:#efefef;border-top:1px solid #fdfdfd;border-left:1px solid #fdfdfd;border-right:1px solid #c2c2c2;border-bottom:1px solid #b8b8c8;overflow:hidden"><div class="t" style="left:1px;top:0px;font-size:7.2px;font-weight:bold;line-height:9px;color:#000">Durumu</div></div>
<div style="left:223px;top:228px;width:63px;height:11px;background:#efefef;border-top:1px solid #fdfdfd;border-left:1px solid #fdfdfd;border-right:1px solid #c2c2c2;border-bottom:1px solid #b8b8c8;overflow:hidden"><div class="t" style="left:1px;top:0px;font-size:7.2px;font-weight:bold;line-height:9px;color:#000">İşlem Kodu</div></div>
<div style="left:286px;top:228px;width:167px;height:11px;background:#efefef;border-top:1px solid #fdfdfd;border-left:1px solid #fdfdfd;border-right:1px solid #c2c2c2;border-bottom:1px solid #b8b8c8;overflow:hidden"><div class="t" style="left:1px;top:0px;font-size:7.2px;font-weight:bold;line-height:9px;color:#000">İşlem Tanımı</div></div>
<div style="left:453px;top:228px;width:105px;height:11px;background:#efefef;border-top:1px solid #fdfdfd;border-left:1px solid #fdfdfd;border-right:1px solid #c2c2c2;border-bottom:1px solid #b8b8c8;overflow:hidden"><div class="t" style="left:1px;top:0px;font-size:7.2px;font-weight:bold;line-height:9px;color:#000">Açıklama</div></div>
<div style="left:558px;top:228px;width:57px;height:11px;background:#efefef;border-top:1px solid #fdfdfd;border-left:1px solid #fdfdfd;border-right:1px solid #c2c2c2;border-bottom:1px solid #b8b8c8;overflow:hidden"><div class="t" style="left:1px;top:0px;font-size:7.2px;font-weight:bold;line-height:9px;color:#000">Kaç Saat Sürdü</div></div>
<div style="left:615px;top:228px;width:44px;height:11px;background:#efefef;border-top:1px solid #fdfdfd;border-left:1px solid #fdfdfd;border-right:1px solid #c2c2c2;border-bottom:1px solid #b8b8c8;overflow:hidden"><div class="t" style="left:1px;top:0px;font-size:7.2px;font-weight:bold;line-height:9px;color:#000">Saat Ücreti</div></div>
<div style="left:659px;top:228px;width:57px;height:11px;background:#efefef;border-top:1px solid #fdfdfd;border-left:1px solid #fdfdfd;border-right:1px solid #c2c2c2;border-bottom:1px solid #b8b8c8;overflow:hidden"><div class="t" style="left:1px;top:0px;font-size:7.2px;font-weight:bold;line-height:9px;color:#000">Ücreti</div></div>
<div style="left:716px;top:228px;width:69px;height:11px;background:#efefef;border-top:1px solid #fdfdfd;border-left:1px solid #fdfdfd;border-right:1px solid #c2c2c2;border-bottom:1px solid #b8b8c8;overflow:hidden"><div class="t" style="left:1px;top:0px;font-size:7.2px;font-weight:bold;line-height:9px;color:#000">Bşl.Tarihi</div></div>
<div style="left:785px;top:228px;width:70px;height:11px;background:#efefef;border-top:1px solid #fdfdfd;border-left:1px solid #fdfdfd;border-right:1px solid #c2c2c2;border-bottom:1px solid #b8b8c8;overflow:hidden"><div class="t" style="left:1px;top:0px;font-size:7.2px;font-weight:bold;line-height:9px;color:#000">Bts.Tarihi</div></div>
<div style="left:179px;top:240px;width:44px;height:11px;background:#fef584;border-right:1px solid rgba(255,255,255,0.45);border-bottom:1px solid rgba(255,255,255,0.45);overflow:hidden;"><div class="t" style="left:1px;top:1px;font-size:7px;font-weight:bold;line-height:10px;color:#000">Yapılacak</div></div>
<div style="left:223px;top:240px;width:63px;height:11px;background:#fef584;border-right:1px solid rgba(255,255,255,0.45);border-bottom:1px solid rgba(255,255,255,0.45);overflow:hidden;"><div class="t" style="left:1px;top:1px;font-size:7.6px;font-weight:bold;line-height:10px;color:#000">001</div></div>
<div style="left:286px;top:240px;width:167px;height:11px;background:#fef584;border-right:1px solid rgba(255,255,255,0.45);border-bottom:1px solid rgba(255,255,255,0.45);overflow:hidden;"><div class="t" style="left:1px;top:1px;font-size:7px;font-weight:bold;line-height:10px;color:#000">BAKIM ONARIM</div></div>
<div style="left:453px;top:240px;width:105px;height:11px;background:#fef584;border-right:1px solid rgba(255,255,255,0.45);border-bottom:1px solid rgba(255,255,255,0.45);overflow:hidden;"><div class="t" style="left:1px;top:1px;font-size:7px;font-weight:bold;line-height:10px;color:#000"></div></div>
<div style="left:558px;top:240px;width:57px;height:11px;background:#fef584;border-right:1px solid rgba(255,255,255,0.45);border-bottom:1px solid rgba(255,255,255,0.45);overflow:hidden;"><div class="t" style="left:1px;top:1px;font-size:7px;font-weight:bold;line-height:10px;color:#000"></div></div>
<div style="left:615px;top:240px;width:44px;height:11px;background:#fef584;border-right:1px solid rgba(255,255,255,0.45);border-bottom:1px solid rgba(255,255,255,0.45);overflow:hidden;"><div class="t" style="left:1px;top:1px;font-size:7px;font-weight:bold;line-height:10px;color:#000"></div></div>
<div style="left:659px;top:240px;width:57px;height:11px;background:#fef584;border-right:1px solid rgba(255,255,255,0.45);border-bottom:1px solid rgba(255,255,255,0.45);overflow:hidden;"><div class="t" style="right:1px;top:1px;font-size:7.6px;font-weight:bold;line-height:10px;color:#000">250,00</div></div>
<div style="left:716px;top:240px;width:69px;height:11px;background:#fef584;border-right:1px solid rgba(255,255,255,0.45);border-bottom:1px solid rgba(255,255,255,0.45);overflow:hidden;"><div class="t" style="left:1px;top:1px;font-size:7px;font-weight:bold;line-height:10px;color:#000"></div></div>
<div style="left:785px;top:240px;width:70px;height:11px;background:#fef584;border-right:1px solid rgba(255,255,255,0.45);border-bottom:1px solid rgba(255,255,255,0.45);overflow:hidden;"><div class="t" style="left:1px;top:1px;font-size:7px;font-weight:bold;line-height:10px;color:#000"></div></div>
<div style="left:179px;top:251px;width:44px;height:11px;background:#fef584;border-right:1px solid rgba(255,255,255,0.45);border-bottom:1px solid rgba(255,255,255,0.45);overflow:hidden;"><div class="t" style="left:1px;top:1px;font-size:7px;font-weight:bold;line-height:10px;color:#000">Yapılacak</div></div>
<div style="left:223px;top:251px;width:63px;height:11px;background:#fef584;border-right:1px solid rgba(255,255,255,0.45);border-bottom:1px solid rgba(255,255,255,0.45);overflow:hidden;"><div class="t" style="left:1px;top:1px;font-size:7.6px;font-weight:bold;line-height:10px;color:#000">002</div></div>
<div style="left:286px;top:251px;width:167px;height:11px;background:#fef584;border-right:1px solid rgba(255,255,255,0.45);border-bottom:1px solid rgba(255,255,255,0.45);overflow:hidden;"><div class="t" style="left:1px;top:1px;font-size:7px;font-weight:bold;line-height:10px;color:#000">DIŞ PARÇA DEĞİŞİMİ</div></div>
<div style="left:453px;top:251px;width:105px;height:11px;background:#fef584;border-right:1px solid rgba(255,255,255,0.45);border-bottom:1px solid rgba(255,255,255,0.45);overflow:hidden;"><div class="t" style="left:1px;top:1px;font-size:7px;font-weight:bold;line-height:10px;color:#000"></div></div>
<div style="left:558px;top:251px;width:57px;height:11px;background:#fef584;border-right:1px solid rgba(255,255,255,0.45);border-bottom:1px solid rgba(255,255,255,0.45);overflow:hidden;"><div class="t" style="left:1px;top:1px;font-size:7px;font-weight:bold;line-height:10px;color:#000"></div></div>
<div style="left:615px;top:251px;width:44px;height:11px;background:#fef584;border-right:1px solid rgba(255,255,255,0.45);border-bottom:1px solid rgba(255,255,255,0.45);overflow:hidden;"><div class="t" style="left:1px;top:1px;font-size:7px;font-weight:bold;line-height:10px;color:#000"></div></div>
<div style="left:659px;top:251px;width:57px;height:11px;background:#fef584;border-right:1px solid rgba(255,255,255,0.45);border-bottom:1px solid rgba(255,255,255,0.45);overflow:hidden;"><div class="t" style="right:1px;top:1px;font-size:7.6px;font-weight:bold;line-height:10px;color:#000">175,00</div></div>
<div style="left:716px;top:251px;width:69px;height:11px;background:#fef584;border-right:1px solid rgba(255,255,255,0.45);border-bottom:1px solid rgba(255,255,255,0.45);overflow:hidden;"><div class="t" style="left:1px;top:1px;font-size:7px;font-weight:bold;line-height:10px;color:#000"></div></div>
<div style="left:785px;top:251px;width:70px;height:11px;background:#fef584;border-right:1px solid rgba(255,255,255,0.45);border-bottom:1px solid rgba(255,255,255,0.45);overflow:hidden;"><div class="t" style="left:1px;top:1px;font-size:7.6px;font-weight:bold;line-height:10px;color:#000">26.06.2024</div></div>
<div style="left:179px;top:262px;width:44px;height:11px;background:#dcdcdc;border-right:1px solid rgba(255,255,255,0.45);border-bottom:1px solid rgba(255,255,255,0.45);overflow:hidden;"><div class="t" style="left:1px;top:1px;font-size:7px;font-weight:bold;line-height:10px;color:#000">İptal</div></div>
<div style="left:223px;top:262px;width:63px;height:11px;background:#dcdcdc;border-right:1px solid rgba(255,255,255,0.45);border-bottom:1px solid rgba(255,255,255,0.45);overflow:hidden;"><div class="t" style="left:1px;top:1px;font-size:7.6px;font-weight:bold;line-height:10px;color:#000">003</div></div>
<div style="left:286px;top:262px;width:167px;height:11px;background:#dcdcdc;border-right:1px solid rgba(255,255,255,0.45);border-bottom:1px solid rgba(255,255,255,0.45);overflow:hidden;"><div class="t" style="left:1px;top:1px;font-size:7px;font-weight:bold;line-height:10px;color:#000">İÇ PARÇA DEĞİŞİMİ</div></div>
<div style="left:453px;top:262px;width:105px;height:11px;background:#dcdcdc;border-right:1px solid rgba(255,255,255,0.45);border-bottom:1px solid rgba(255,255,255,0.45);overflow:hidden;"><div class="t" style="left:1px;top:1px;font-size:7px;font-weight:bold;line-height:10px;color:#000"></div></div>
<div style="left:558px;top:262px;width:57px;height:11px;background:#dcdcdc;border-right:1px solid rgba(255,255,255,0.45);border-bottom:1px solid rgba(255,255,255,0.45);overflow:hidden;"><div class="t" style="left:1px;top:1px;font-size:7px;font-weight:bold;line-height:10px;color:#000"></div></div>
<div style="left:615px;top:262px;width:44px;height:11px;background:#dcdcdc;border-right:1px solid rgba(255,255,255,0.45);border-bottom:1px solid rgba(255,255,255,0.45);overflow:hidden;"><div class="t" style="left:1px;top:1px;font-size:7px;font-weight:bold;line-height:10px;color:#000"></div></div>
<div style="left:659px;top:262px;width:57px;height:11px;background:#dcdcdc;border-right:1px solid rgba(255,255,255,0.45);border-bottom:1px solid rgba(255,255,255,0.45);overflow:hidden;"><div class="t" style="right:1px;top:1px;font-size:7.6px;font-weight:bold;line-height:10px;color:#000">150,00</div></div>
<div style="left:716px;top:262px;width:69px;height:11px;background:#dcdcdc;border-right:1px solid rgba(255,255,255,0.45);border-bottom:1px solid rgba(255,255,255,0.45);overflow:hidden;"><div class="t" style="left:1px;top:1px;font-size:7px;font-weight:bold;line-height:10px;color:#000"></div></div>
<div style="left:785px;top:262px;width:70px;height:11px;background:#dcdcdc;border-right:1px solid rgba(255,255,255,0.45);border-bottom:1px solid rgba(255,255,255,0.45);overflow:hidden;"><div class="t" style="left:1px;top:1px;font-size:7px;font-weight:bold;line-height:10px;color:#000"></div></div>
<div style="left:179px;top:273px;width:44px;height:11px;background:#fbbe9f;border-right:1px solid rgba(255,255,255,0.45);border-bottom:1px solid rgba(255,255,255,0.45);overflow:hidden;"><div class="t" style="left:1px;top:1px;font-size:7px;font-weight:bold;line-height:10px;color:#000">Yapıldı</div></div>
<div style="left:223px;top:273px;width:63px;height:11px;background:#fbbe9f;border-right:1px solid rgba(255,255,255,0.45);border-bottom:1px solid rgba(255,255,255,0.45);overflow:hidden;"><div class="t" style="left:1px;top:1px;font-size:7.6px;font-weight:bold;line-height:10px;color:#000">004</div></div>
<div style="left:286px;top:273px;width:167px;height:11px;background:#fbbe9f;border-right:1px solid rgba(255,255,255,0.45);border-bottom:1px solid rgba(255,255,255,0.45);overflow:hidden;"><div class="t" style="left:1px;top:1px;font-size:7px;font-weight:bold;line-height:10px;color:#000">KAPAK DEĞİŞİMİ</div></div>
<div style="left:453px;top:273px;width:105px;height:11px;background:#fbbe9f;border-right:1px solid rgba(255,255,255,0.45);border-bottom:1px solid rgba(255,255,255,0.45);overflow:hidden;"><div class="t" style="left:1px;top:1px;font-size:7px;font-weight:bold;line-height:10px;color:#000"></div></div>
<div style="left:558px;top:273px;width:57px;height:11px;background:#fbbe9f;border-right:1px solid rgba(255,255,255,0.45);border-bottom:1px solid rgba(255,255,255,0.45);overflow:hidden;"><div class="t" style="left:1px;top:1px;font-size:7px;font-weight:bold;line-height:10px;color:#000"></div></div>
<div style="left:615px;top:273px;width:44px;height:11px;background:#fbbe9f;border-right:1px solid rgba(255,255,255,0.45);border-bottom:1px solid rgba(255,255,255,0.45);overflow:hidden;"><div class="t" style="left:1px;top:1px;font-size:7px;font-weight:bold;line-height:10px;color:#000"></div></div>
<div style="left:659px;top:273px;width:57px;height:11px;background:#fbbe9f;border-right:1px solid rgba(255,255,255,0.45);border-bottom:1px solid rgba(255,255,255,0.45);overflow:hidden;"><div class="t" style="right:1px;top:1px;font-size:7.6px;font-weight:bold;line-height:10px;color:#000">185,00</div></div>
<div style="left:716px;top:273px;width:69px;height:11px;background:#fbbe9f;border-right:1px solid rgba(255,255,255,0.45);border-bottom:1px solid rgba(255,255,255,0.45);overflow:hidden;"><div class="t" style="left:1px;top:1px;font-size:7px;font-weight:bold;line-height:10px;color:#000"></div></div>
<div style="left:785px;top:273px;width:70px;height:11px;background:#fbbe9f;border-right:1px solid rgba(255,255,255,0.45);border-bottom:1px solid rgba(255,255,255,0.45);overflow:hidden;"><div class="t" style="left:1px;top:1px;font-size:7.6px;font-weight:bold;line-height:10px;color:#000">26.06.2024</div></div>
<div style="left:179px;top:284px;width:44px;height:11px;background:#fbbe9f;border-right:1px solid rgba(255,255,255,0.45);border-bottom:1px solid rgba(255,255,255,0.45);overflow:hidden;"><div class="t" style="left:1px;top:1px;font-size:7px;font-weight:bold;line-height:10px;color:#000">Yapıldı</div></div>
<div style="left:223px;top:284px;width:63px;height:11px;background:#fbbe9f;border-right:1px solid rgba(255,255,255,0.45);border-bottom:1px solid rgba(255,255,255,0.45);overflow:hidden;"><div class="t" style="left:1px;top:1px;font-size:7.6px;font-weight:bold;line-height:10px;color:#000">005</div></div>
<div style="left:286px;top:284px;width:167px;height:11px;background:#fbbe9f;border-right:1px solid rgba(255,255,255,0.45);border-bottom:1px solid rgba(255,255,255,0.45);overflow:hidden;"><div class="t" style="left:1px;top:1px;font-size:7px;font-weight:bold;line-height:10px;color:#000">MEKANİK AKSAM KONTROLLERİ</div></div>
<div style="left:453px;top:284px;width:105px;height:11px;background:#fbbe9f;border-right:1px solid rgba(255,255,255,0.45);border-bottom:1px solid rgba(255,255,255,0.45);overflow:hidden;"><div class="t" style="left:1px;top:1px;font-size:7px;font-weight:bold;line-height:10px;color:#000"></div></div>
<div style="left:558px;top:284px;width:57px;height:11px;background:#fbbe9f;border-right:1px solid rgba(255,255,255,0.45);border-bottom:1px solid rgba(255,255,255,0.45);overflow:hidden;"><div class="t" style="left:1px;top:1px;font-size:7px;font-weight:bold;line-height:10px;color:#000"></div></div>
<div style="left:615px;top:284px;width:44px;height:11px;background:#fbbe9f;border-right:1px solid rgba(255,255,255,0.45);border-bottom:1px solid rgba(255,255,255,0.45);overflow:hidden;"><div class="t" style="left:1px;top:1px;font-size:7px;font-weight:bold;line-height:10px;color:#000"></div></div>
<div style="left:659px;top:284px;width:57px;height:11px;background:#fbbe9f;border-right:1px solid rgba(255,255,255,0.45);border-bottom:1px solid rgba(255,255,255,0.45);overflow:hidden;"><div class="t" style="right:1px;top:1px;font-size:7.6px;font-weight:bold;line-height:10px;color:#000">120,00</div></div>
<div style="left:716px;top:284px;width:69px;height:11px;background:#fbbe9f;border-right:1px solid rgba(255,255,255,0.45);border-bottom:1px solid rgba(255,255,255,0.45);overflow:hidden;"><div class="t" style="left:1px;top:1px;font-size:7px;font-weight:bold;line-height:10px;color:#000"></div></div>
<div style="left:785px;top:284px;width:70px;height:11px;background:#fbbe9f;border-right:1px solid rgba(255,255,255,0.45);border-bottom:1px solid rgba(255,255,255,0.45);overflow:hidden;"><div class="t" style="left:1px;top:1px;font-size:7.6px;font-weight:bold;line-height:10px;color:#000">26.06.2024</div></div>
<div style="left:179px;top:295px;width:44px;height:11px;background:#fef584;border-right:1px solid rgba(255,255,255,0.45);border-bottom:1px solid rgba(255,255,255,0.45);overflow:hidden;"><div class="t" style="left:1px;top:1px;font-size:7px;font-weight:bold;line-height:10px;color:#000">Yapılacak</div></div>
<div style="left:223px;top:295px;width:63px;height:11px;background:#fef584;border-right:1px solid rgba(255,255,255,0.45);border-bottom:1px solid rgba(255,255,255,0.45);overflow:hidden;"><div class="t" style="left:1px;top:1px;font-size:7.6px;font-weight:bold;line-height:10px;color:#000">006</div></div>
<div style="left:286px;top:295px;width:167px;height:11px;background:#fef584;border-right:1px solid rgba(255,255,255,0.45);border-bottom:1px solid rgba(255,255,255,0.45);overflow:hidden;"><div class="t" style="left:1px;top:1px;font-size:7px;font-weight:bold;line-height:10px;color:#000">ELKTRONİK AKSAM KONTROLLERİ</div></div>
<div style="left:453px;top:295px;width:105px;height:11px;background:#fef584;border-right:1px solid rgba(255,255,255,0.45);border-bottom:1px solid rgba(255,255,255,0.45);overflow:hidden;"><div class="t" style="left:1px;top:1px;font-size:7px;font-weight:bold;line-height:10px;color:#000"></div></div>
<div style="left:558px;top:295px;width:57px;height:11px;background:#fef584;border-right:1px solid rgba(255,255,255,0.45);border-bottom:1px solid rgba(255,255,255,0.45);overflow:hidden;"><div class="t" style="left:1px;top:1px;font-size:7px;font-weight:bold;line-height:10px;color:#000"></div></div>
<div style="left:615px;top:295px;width:44px;height:11px;background:#fef584;border-right:1px solid rgba(255,255,255,0.45);border-bottom:1px solid rgba(255,255,255,0.45);overflow:hidden;"><div class="t" style="left:1px;top:1px;font-size:7px;font-weight:bold;line-height:10px;color:#000"></div></div>
<div style="left:659px;top:295px;width:57px;height:11px;background:#fef584;border-right:1px solid rgba(255,255,255,0.45);border-bottom:1px solid rgba(255,255,255,0.45);overflow:hidden;"><div class="t" style="right:1px;top:1px;font-size:7.6px;font-weight:bold;line-height:10px;color:#000">80,00</div></div>
<div style="left:716px;top:295px;width:69px;height:11px;background:#fef584;border-right:1px solid rgba(255,255,255,0.45);border-bottom:1px solid rgba(255,255,255,0.45);overflow:hidden;"><div class="t" style="left:1px;top:1px;font-size:7px;font-weight:bold;line-height:10px;color:#000"></div></div>
<div style="left:785px;top:295px;width:70px;height:11px;background:#fef584;border-right:1px solid rgba(255,255,255,0.45);border-bottom:1px solid rgba(255,255,255,0.45);overflow:hidden;"><div class="t" style="left:1px;top:1px;font-size:7px;font-weight:bold;line-height:10px;color:#000"></div></div>
<svg style="position:absolute;left:172px;top:242px" width="5" height="7"><path d="M0.5 0.5L4.5 3.5L0.5 6.5Z" fill="#000"/></svg>
<div style="left:179px;top:240px;width:44px;height:11px;background:#1070d8;border:1px solid #3a3a3a"><div class="t" style="left:0px;top:0px;font-size:7px;font-weight:bold;line-height:11px;color:#fff">Yapılacak</div></div>
<div style="left:1185px;top:228px;width:10px;height:341px;background:#f0f0f0"></div>
<div style="left:1185px;top:228px;width:10px;height:11px;background:#fafafa"></div>
<svg style="position:absolute;left:1186px;top:231px" width="8" height="6"><path d="M1 4.5L4 1.5L7 4.5" fill="none" stroke="#333" stroke-width="1.1"/></svg>
<div style="left:1186px;top:239px;width:8px;height:142px;background:#cdcdcd"></div>
<svg style="position:absolute;left:1186px;top:560px" width="8" height="6"><path d="M1 1.5L4 4.5L7 1.5" fill="none" stroke="#333" stroke-width="1.1"/></svg>
<div style="left:170px;top:582px;width:1027px;height:1px;background:#dcdcdc"></div>
<div style="left:172px;top:576px;width:55px;height:11px;background:#f0f0f0"></div>
<div class="t" style="left:176px;top:576px;font-size:7.4px;font-weight:bold;line-height:11px;color:#0a0a86">Alt Toplamlar</div>
<div style="left:170px;top:586px;width:1027px;height:52px;background:#fff;border:1px solid #c6c6c6;border-bottom:2px solid #c8c8c8"></div>
<div style="left:171px;top:587px;width:8px;height:11px;background:#efefef;border-top:1px solid #fdfdfd;border-bottom:1px solid #b8b8c8"></div>
<svg style="position:absolute;left:172px;top:590px" width="6" height="6"><g fill="#6a5840"><rect x="0" y="0" width="1.3" height="1.3"/><rect x="3" y="0" width="1.3" height="1.3"/><rect x="0" y="3" width="1.3" height="1.3"/><rect x="3" y="3" width="1.3" height="1.3"/></g></svg>
<div style="left:179px;top:587px;width:63px;height:11px;background:#efefef;border-top:1px solid #fdfdfd;border-left:1px solid #fdfdfd;border-right:1px solid #c2c2c2;border-bottom:1px solid #b8b8c8;overflow:hidden"><div class="t" style="left:1px;top:1px;font-size:7.2px;font-weight:bold;line-height:9px;color:#000">Parça Toplamı</div></div>
<div style="left:179px;top:598px;width:63px;height:11px;background:#d0e5fa;border-right:1px solid rgba(255,255,255,0.45);border-bottom:1px solid rgba(255,255,255,0.45);overflow:hidden;"><div class="t" style="right:1px;top:2px;font-size:7.6px;font-weight:bold;line-height:10px;color:#000">42.310,80</div></div>
<div style="left:242px;top:587px;width:63px;height:11px;background:#efefef;border-top:1px solid #fdfdfd;border-left:1px solid #fdfdfd;border-right:1px solid #c2c2c2;border-bottom:1px solid #b8b8c8;overflow:hidden"><div class="t" style="left:1px;top:1px;font-size:7.2px;font-weight:bold;line-height:9px;color:#000">İşçilik Toplamı</div></div>
<div style="left:242px;top:598px;width:63px;height:11px;background:#d0e5fa;border-right:1px solid rgba(255,255,255,0.45);border-bottom:1px solid rgba(255,255,255,0.45);overflow:hidden;"><div class="t" style="right:1px;top:2px;font-size:7.6px;font-weight:bold;line-height:10px;color:#000">0,00</div></div>
<div style="left:305px;top:587px;width:63px;height:11px;background:#efefef;border-top:1px solid #fdfdfd;border-left:1px solid #fdfdfd;border-right:1px solid #c2c2c2;border-bottom:1px solid #b8b8c8;overflow:hidden"><div class="t" style="left:1px;top:1px;font-size:7.2px;font-weight:bold;line-height:9px;color:#000">Toplam</div></div>
<div style="left:305px;top:598px;width:63px;height:11px;background:#d0e5fa;border-right:1px solid rgba(255,255,255,0.45);border-bottom:1px solid rgba(255,255,255,0.45);overflow:hidden;"><div class="t" style="right:1px;top:2px;font-size:7.6px;font-weight:bold;line-height:10px;color:#000">42.310,80</div></div>
<div style="left:368px;top:587px;width:63px;height:11px;background:#efefef;border-top:1px solid #fdfdfd;border-left:1px solid #fdfdfd;border-right:1px solid #c2c2c2;border-bottom:1px solid #b8b8c8;overflow:hidden"><div class="t" style="left:1px;top:1px;font-size:7.2px;font-weight:bold;line-height:9px;color:#000">İsk.Toplamı</div></div>
<div style="left:368px;top:598px;width:63px;height:11px;background:#d0e5fa;border-right:1px solid rgba(255,255,255,0.45);border-bottom:1px solid rgba(255,255,255,0.45);overflow:hidden;"><div class="t" style="right:1px;top:2px;font-size:7.6px;font-weight:bold;line-height:10px;color:#000">0,00</div></div>
<div style="left:431px;top:587px;width:63px;height:11px;background:#efefef;border-top:1px solid #fdfdfd;border-left:1px solid #fdfdfd;border-right:1px solid #c2c2c2;border-bottom:1px solid #b8b8c8;overflow:hidden"><div class="t" style="left:1px;top:1px;font-size:7.2px;font-weight:bold;line-height:9px;color:#000">KDV Toplamı</div></div>
<div style="left:431px;top:598px;width:63px;height:11px;background:#d0e5fa;border-right:1px solid rgba(255,255,255,0.45);border-bottom:1px solid rgba(255,255,255,0.45);overflow:hidden;"><div class="t" style="right:1px;top:2px;font-size:7.6px;font-weight:bold;line-height:10px;color:#000">8.462,16</div></div>
<div style="left:494px;top:587px;width:63px;height:11px;background:#efefef;border-top:1px solid #fdfdfd;border-left:1px solid #fdfdfd;border-right:1px solid #c2c2c2;border-bottom:1px solid #b8b8c8;overflow:hidden"><div class="t" style="left:1px;top:1px;font-size:7.2px;font-weight:bold;line-height:9px;color:#000">Genel Toplam</div></div>
<div style="left:494px;top:598px;width:63px;height:11px;background:#d0e5fa;border-right:1px solid rgba(255,255,255,0.45);border-bottom:1px solid rgba(255,255,255,0.45);overflow:hidden;"><div class="t" style="right:1px;top:2px;font-size:7.6px;font-weight:bold;line-height:10px;color:#000">50.772,96</div></div>
<div style="left:557px;top:587px;width:70px;height:11px;background:#efefef;border-top:1px solid #fdfdfd;border-left:1px solid #fdfdfd;border-right:1px solid #c2c2c2;border-bottom:1px solid #b8b8c8;overflow:hidden"><div class="t" style="left:1px;top:1px;font-size:7.2px;font-weight:bold;line-height:9px;color:#000">Dış Servis Toplamı</div></div>
<div style="left:557px;top:598px;width:70px;height:11px;background:#d0e5fa;border-right:1px solid rgba(255,255,255,0.45);border-bottom:1px solid rgba(255,255,255,0.45);overflow:hidden;"><div class="t" style="right:1px;top:2px;font-size:7.6px;font-weight:bold;line-height:10px;color:#000">0,00</div></div>
<div style="left:627px;top:587px;width:32px;height:11px;background:#efefef;border-top:1px solid #fdfdfd;border-left:1px solid #fdfdfd;border-right:1px solid #c2c2c2;border-bottom:1px solid #b8b8c8;overflow:hidden"><div class="t" style="left:1px;top:1px;font-size:7.2px;font-weight:bold;line-height:9px;color:#a09018">Hesap</div></div>
<div style="left:627px;top:598px;width:32px;height:11px;background:#d0e5fa;border-right:1px solid rgba(255,255,255,0.45);border-bottom:1px solid rgba(255,255,255,0.45);overflow:hidden;"><div class="t" style="left:1px;top:2px;font-size:7px;font-weight:bold;line-height:10px;color:#a09018">TL</div></div>
<svg style="position:absolute;left:172px;top:600px" width="5" height="8"><path d="M0.5 0.5L4.5 4L0.5 7.5Z" fill="#000"/></svg>
<svg style="position:absolute;left:713px;top:464px" width="12" height="16"><path d="M1.5 1.5L1.5 12L4 9.8L5.8 13.5L7.3 12.8L5.6 9.3L8.8 9Z" fill="#fff" stroke="#2a2a36" stroke-width="0.9" stroke-linejoin="round"/></svg>
</body></html>
